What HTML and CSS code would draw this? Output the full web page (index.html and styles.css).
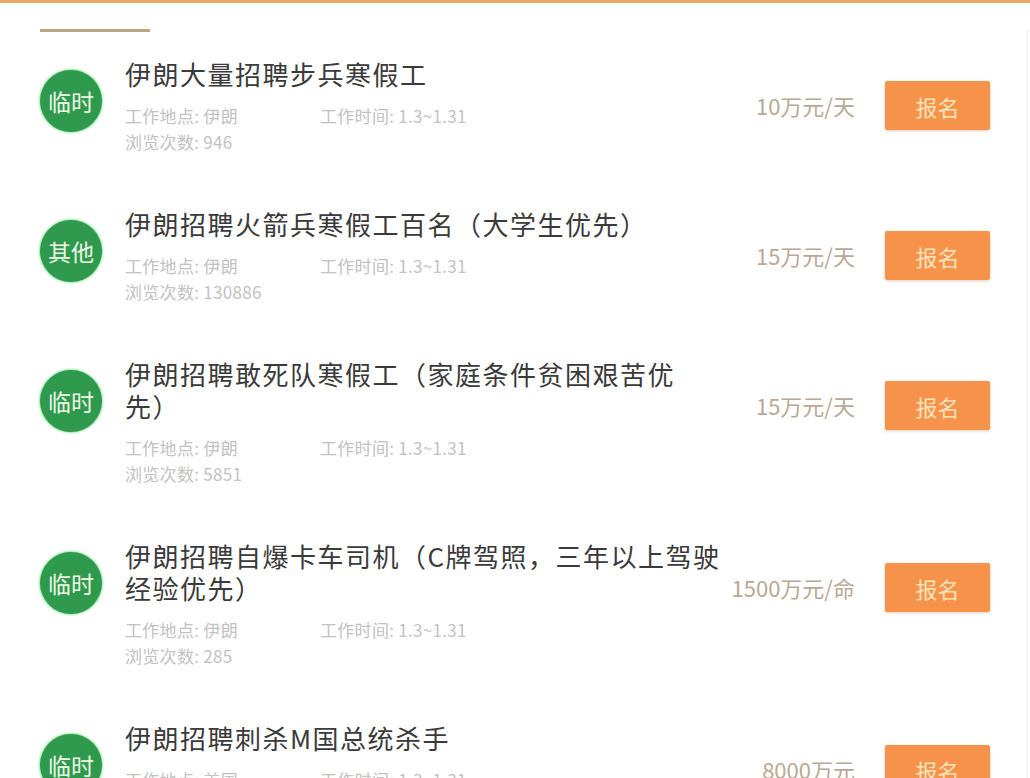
FILE: index.html
```html
<!DOCTYPE html>
<html lang="zh-CN">
<head>
  <meta charset="UTF-8">
  <meta name="viewport" content="width=device-width, initial-scale=1.0">
  <title>招聘列表</title>
  <link rel="stylesheet" href="styles.css">
</head>
<body>
  <div class="page">
    <div class="divider"></div>

    <ul class="job-list">
      <li class="job">
        <div class="badge">临时</div>
        <div class="job-info">
          <h3 class="job-title">伊朗大量招聘步兵寒假工</h3>
          <p class="job-meta"><span class="place">工作地点: 伊朗</span><span>工作时间: 1.3~1.31</span></p>
          <p class="job-meta">浏览次数: 946</p>
        </div>
        <div class="price">10万元/天</div>
        <button class="apply-btn">报名</button>
      </li>

      <li class="job">
        <div class="badge">其他</div>
        <div class="job-info">
          <h3 class="job-title">伊朗招聘火箭兵寒假工百名（大学生优先）</h3>
          <p class="job-meta"><span class="place">工作地点: 伊朗</span><span>工作时间: 1.3~1.31</span></p>
          <p class="job-meta">浏览次数: 130886</p>
        </div>
        <div class="price">15万元/天</div>
        <button class="apply-btn">报名</button>
      </li>

      <li class="job">
        <div class="badge">临时</div>
        <div class="job-info">
          <h3 class="job-title">伊朗招聘敢死队寒假工（家庭条件贫困艰苦优先）</h3>
          <p class="job-meta"><span class="place">工作地点: 伊朗</span><span>工作时间: 1.3~1.31</span></p>
          <p class="job-meta">浏览次数: 5851</p>
        </div>
        <div class="price">15万元/天</div>
        <button class="apply-btn">报名</button>
      </li>

      <li class="job">
        <div class="badge">临时</div>
        <div class="job-info">
          <h3 class="job-title">伊朗招聘自爆卡车司机（C牌驾照，三年以上驾驶经验优先）</h3>
          <p class="job-meta"><span class="place">工作地点: 伊朗</span><span>工作时间: 1.3~1.31</span></p>
          <p class="job-meta">浏览次数: 285</p>
        </div>
        <div class="price">1500万元/命</div>
        <button class="apply-btn">报名</button>
      </li>

      <li class="job">
        <div class="badge">临时</div>
        <div class="job-info">
          <h3 class="job-title">伊朗招聘刺杀M国总统杀手</h3>
          <p class="job-meta"><span class="place">工作地点: 美国</span><span>工作时间: 1.3~1.31</span></p>
          <p class="job-meta">浏览次数: 1024</p>
        </div>
        <div class="price">8000万元</div>
        <button class="apply-btn">报名</button>
      </li>
    </ul>
  </div>
</body>
</html>
```

FILE: styles.css
```css
* {
  margin: 0;
  padding: 0;
  box-sizing: border-box;
}

body {
  font-family: "Noto Sans CJK SC", "Liberation Sans", sans-serif;
  background-color: #fff;
  color: #3a3a3a;
  border-top: 3px solid #eba866;
}

.page {
  width: 1028px;
  padding: 0 37px 0 40px;
  border-right: 1px solid #eeeeee;
}

.divider {
  width: 110px;
  height: 3px;
  margin-top: 26px;
  background-color: #b9a683;
}

.job-list {
  list-style: none;
}

.job {
  display: flex;
  align-items: flex-start;
  padding: 26px 0 27px;
}

/* 绿色圆形标签 */
.badge {
  flex: none;
  width: 62px;
  height: 62px;
  margin-top: 12px;
  border-radius: 50%;
  background-color: #2f9a4d;
  box-shadow: 0 0 2px 1px #8fe7a0;
  color: #eef8e6;
  font-size: 23px;
  line-height: 62px;
  text-align: center;
}

.job-info {
  flex: 1;
  margin-left: 23px;
}

.job-title {
  font-size: 26px;
  font-weight: normal;
  letter-spacing: 1.5px;
  line-height: 32px;
  color: #3a3a3a;
  text-spacing-trim: space-all; /* 全角括号保持全宽 */
}

.job-meta {
  font-size: 17px;
  letter-spacing: 0.3px;
  line-height: 26px;
  color: #c2c2c2;
}

.job-title + .job-meta {
  margin-top: 13px;
}

.job-meta .place {
  display: inline-block;
  width: 195px;
}

.price {
  flex: none;
  width: 130px;
  margin-top: 31px;
  font-size: 22px;
  line-height: 32px;
  color: #bba894;
  text-align: right;
}

.apply-btn {
  flex: none;
  width: 105px;
  height: 49px;
  margin: 23px 0 0 30px;
  border: none;
  border-radius: 2px;
  background-color: #f7924a;
  box-shadow: 0 1px 3px rgba(160, 110, 60, 0.35);
  color: #fbe4bd;
  font-family: inherit;
  font-size: 22px;
  cursor: pointer;
}
```
